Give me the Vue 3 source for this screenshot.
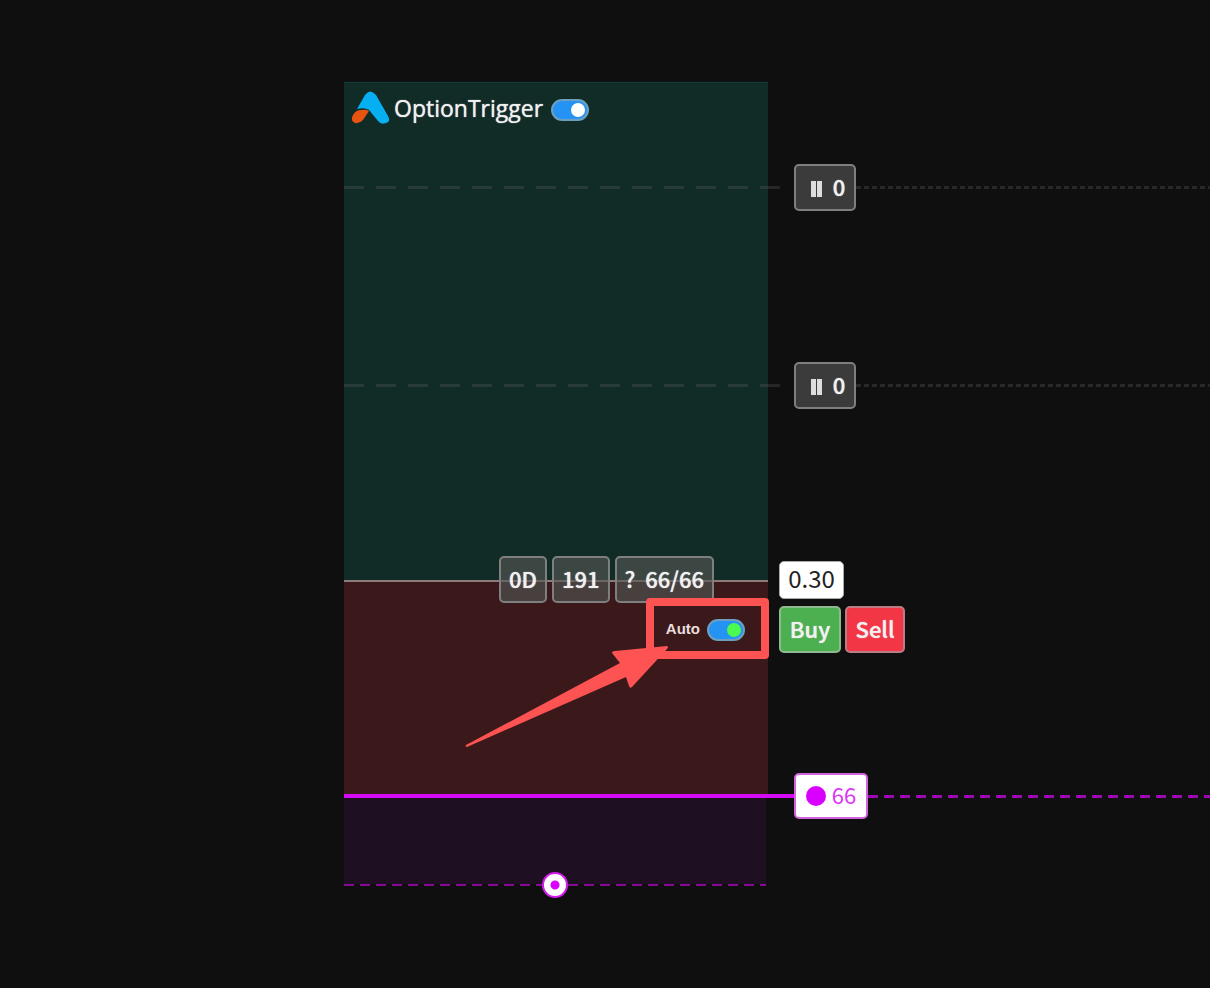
<script setup>
import { ref } from 'vue'

const triggerOn = ref(true)
const autoOn = ref(true)
const targets = [
  { id: 'upper', count: 0 },
  { id: 'lower', count: 0 }
]
</script>

<template>
  <main class="chart">
    <section class="zones" aria-label="Option trigger range">
      <div class="zone profit">
        <header class="title">
          <svg class="logo" viewBox="0 0 38 34" aria-hidden="true">
            <path d="M5 18 13 4Q18-3 24 4L36 25Q39 31 34 32Q29 34 26 30L17 19Q12 16 5 18Z" fill="#06aff2" />
            <path d="M1 24Q4 19 9 19Q14 18 17 20L11 29Q7 33 3 32Q-2 30 1 24Z" fill="#e95312" />
          </svg>
          <label class="name" for="trigger">OptionTrigger</label>
          <input id="trigger" v-model="triggerOn" class="switch" type="checkbox" role="switch" />
        </header>
      </div>
      <div class="zone loss">
        <div class="auto">
          <label for="auto">Auto</label>
          <input id="auto" v-model="autoOn" class="switch green" type="checkbox" role="switch" />
        </div>
      </div>
      <div class="zone stop"></div>
    </section>

    <div v-for="t in targets" :key="t.id" class="level" :class="t.id">
      <i class="long-dash"></i>
      <button class="chip pause" type="button" aria-label="Paused target">
        <svg viewBox="0 0 11 16" aria-hidden="true"><path d="M0 0h5v16H0zM6 0H11v16H6z" fill="#ddd" /></svg>
        <span>{{ t.count }}</span>
      </button>
      <i class="dots"></i>
    </div>

    <div class="details">
      <button class="chip" type="button">0D</button>
      <button class="chip" type="button">191</button>
      <button class="chip" type="button">?&nbsp; 66/66</button>
    </div>

    <div class="order">
      <output class="price">0.30</output>
      <div class="actions">
        <button class="chip buy" type="button">Buy</button>
        <button class="chip sell" type="button">Sell</button>
      </div>
    </div>

    <div class="level entry">
      <i class="solid"></i>
      <button class="chip quantity" type="button"><i class="dot"></i><span>66</span></button>
      <i class="dashes"></i>
    </div>

    <div class="bottom-line"><button class="handle" type="button" aria-label="Drag range"></button></div>

    <div class="highlight"></div>
    <svg class="arrow" viewBox="0 0 204 104" aria-hidden="true">
      <path d="M1 102 155 20 147 10Q147 8 150 8L202 3Q204 4 202 6L167 44Q165 46 164 43L161 34 2 104Q0 104 1 102Z" fill="#fd5352" />
    </svg>
  </main>
</template>

<style>
body {
  margin: 0;
  background: #0f0f0f;
}
</style>

<style scoped>
.chart {
  position: relative;
  box-sizing: border-box;
  min-height: 100vh;
  padding: 82px 0 0 344px;
  overflow: hidden;
  background: #0f0f0f;
  color: #f0f0f0;
  font: 500 22px/28px "Noto Sans CJK SC", "Noto Sans", sans-serif;
}
button {
  font: inherit;
  color: inherit;
  cursor: pointer;
}
.zones {
  width: 424px;
}
.zone {
  box-sizing: border-box;
}
.profit {
  height: 498px;
  border-top: 1px solid #114038;
  background: #112b27;
}
.loss {
  height: 216px;
  border-top: 2px solid #8d7b7b;
  background: #3b181a;
}
.stop {
  width: 422px;
  height: 88px;
  background: #1f0f22;
}
.title {
  display: flex;
  align-items: center;
  padding: 8px;
}
.title .switch {
  margin-top: 4px;
}
.logo {
  width: 38px;
  height: 34px;
}
.name {
  margin: 0 8px 0 4px;
  font-size: 23px;
  font-weight: 400;
  font-family: "Open Sans", "Noto Sans", sans-serif;
  text-shadow: 0 0 1px currentColor;
}
.switch {
  appearance: none;
  box-sizing: border-box;
  display: flex;
  align-items: center;
  justify-content: flex-start;
  width: 38px;
  height: 22px;
  margin: 0;
  padding: 0 2px;
  border: 2px solid #6e9fbe;
  border-radius: 11px;
  background: #2593f3;
  cursor: pointer;
}
.switch:checked {
  justify-content: flex-end;
}
.switch::before {
  content: "";
  width: 14px;
  height: 14px;
  border-radius: 50%;
  background: #fff;
}
.green::before {
  background: #4bfa4f;
}
.auto {
  display: flex;
  align-items: center;
  justify-content: flex-end;
  gap: 7px;
  padding: 34px 23px 0 0;
  font: 700 15px/28px "Liberation Sans", sans-serif;
  color: #e8dede;
}
.auto label {
  padding-bottom: 2px;
  line-height: 26px;
}
.level {
  position: absolute;
  left: 344px;
  right: 0;
  display: flex;
  align-items: center;
}
.upper {
  top: 164px;
}
.lower {
  top: 362px;
}
.entry {
  top: 773px;
}
.long-dash {
  width: 436px;
  height: 3px;
  margin-right: 14px;
  background: repeating-linear-gradient(90deg, #6a6a6a42 0 20px, transparent 20px 32px);
}
.dots {
  flex: 1;
  height: 3px;
  background: repeating-linear-gradient(90deg, #282828 0 5px, transparent 5px 8px);
}
.solid {
  width: 450px;
  height: 4px;
  background: #d50bf5;
}
.dashes {
  flex: 1;
  height: 3px;
  background: repeating-linear-gradient(90deg, #a005b5 0 10px, transparent 10px 16px);
}
.chip {
  box-sizing: border-box;
  display: flex;
  align-items: center;
  justify-content: center;
  height: 47px;
  padding: 0 8px 4px;
  border: 2px solid #7f7f7f;
  border-radius: 5px;
  background: #4b4746;
  text-shadow: 0 0 1px currentColor;
  white-space: nowrap;
}
.pause {
  gap: 11px;
  width: 62px;
  padding: 0 0 4px 6px;
  background: #3b3b3b;
}
.pause svg {
  width: 11px;
  height: 16px;
  margin-top: 6px;
}
.details {
  position: absolute;
  top: 556px;
  left: 499px;
  display: flex;
  gap: 5px;
}
.details .chip {
  background: linear-gradient(#3c4643 0 22px, #6b6664 22px 24px, #48403f 24px);
}
.order {
  position: absolute;
  top: 561px;
  left: 779px;
}
.price {
  display: block;
  box-sizing: border-box;
  width: 65px;
  height: 38px;
  border: 1px solid #aaa;
  border-radius: 5px;
  background: #fff;
  color: #222;
  font-size: 24px;
  font-weight: 400;
  line-height: 32px;
  text-align: center;
}
.actions {
  display: flex;
  gap: 4px;
  margin-top: 7px;
}
.buy {
  width: 62px;
  border-color: #8fb991;
  background: #4caf50;
}
.sell {
  width: 60px;
  border-color: #ba7c85;
  background: #f23645;
}
.quantity {
  gap: 6px;
  width: 74px;
  height: 46px;
  padding-bottom: 0;
  border-color: #d263df;
  background: #fff;
  color: #dc35f5;
  font-weight: 400;
  text-shadow: none;
}
.quantity span {
  padding-bottom: 4px;
}
.dot {
  width: 20px;
  height: 20px;
  border-radius: 50%;
  background: #d900ff;
}
.bottom-line {
  position: absolute;
  top: 871px;
  left: 344px;
  display: flex;
  align-items: center;
  justify-content: center;
  width: 422px;
  height: 28px;
  background: repeating-linear-gradient(90deg, #850b96 0 10px, transparent 10px 16px) 0 13px / 100% 2px no-repeat;
}
.handle {
  box-sizing: border-box;
  width: 26px;
  height: 26px;
  padding: 0;
  border: 2px solid #d31bed;
  border-radius: 50%;
  background: radial-gradient(circle, #d900ff 0 4px, #fff 5px);
}
.highlight {
  position: absolute;
  top: 598px;
  left: 646px;
  box-sizing: border-box;
  width: 123px;
  height: 61px;
  border: 8px solid #fd5352;
  border-radius: 4px;
  pointer-events: none;
}
.arrow {
  position: absolute;
  top: 643px;
  left: 465px;
  width: 204px;
  height: 104px;
  pointer-events: none;
}
</style>
